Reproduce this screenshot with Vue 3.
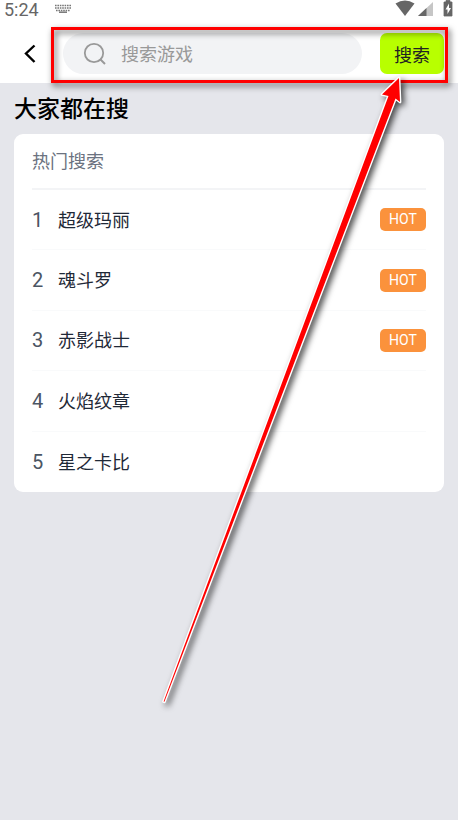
<script setup>
import { ref } from 'vue'

const keyword = ref('')
const games = [
  { name: '超级玛丽', hot: true },
  { name: '魂斗罗', hot: true },
  { name: '赤影战士', hot: true },
  { name: '火焰纹章', hot: false },
  { name: '星之卡比', hot: false },
]
</script>

<template>
  <div class="page">
    <header class="top">
      <div class="status">
        <span class="clock">5:24</span>
        <svg class="keyboard" width="16" height="9" viewBox="0 0 16 9" aria-hidden="true">
          <path d="M0 1.500h16M0 4h16M1 6.500h14" stroke="#777" stroke-width="1.500" stroke-dasharray="1.600 .8" />
          <path d="M4 8.200h8" stroke="#777" stroke-width="1.500" />
        </svg>
        <svg class="signals" width="60" height="18" viewBox="0 0 60 18" aria-hidden="true">
          <path d="M1.500 3.500Q11 -2.500 20.500 3.500L11 16z" fill="#666" />
          <path d="M39 2v14H24z" fill="#c6c6c6" />
          <path d="M32.500 8v8H24z" fill="#666" />
          <path d="M52 0.500h4v1.500h2v14h-8V2h2z" fill="#666" stroke="#666" stroke-width=".8" />
          <path d="M55 3.500l-3.500 6h2v4.500l3.500-6h-2z" fill="#fff" />
        </svg>
      </div>
      <form class="bar" @submit.prevent>
        <button class="back" type="button" aria-label="返回">
          <svg width="14" height="20" viewBox="0 0 14 20" aria-hidden="true">
            <path d="M11.500 1.500L3 9.500l8.500 8.500" fill="none" stroke="#000" stroke-width="2.400" />
          </svg>
        </button>
        <label class="field">
          <svg width="24" height="24" viewBox="0 0 24 24" aria-hidden="true">
            <circle cx="11" cy="11" r="9.200" fill="none" stroke="#999" stroke-width="1.800" />
            <path d="M17 17l5 5" stroke="#999" stroke-width="2" />
          </svg>
          <input v-model="keyword" type="text" placeholder="搜索游戏" aria-label="搜索游戏" />
        </label>
        <button class="submit" type="submit">搜索</button>
      </form>
      <div class="frame"></div>
    </header>

    <main>
      <h1>大家都在搜</h1>
      <section class="card">
        <h2>热门搜索</h2>
        <ol>
          <li v-for="(game, i) in games" :key="game.name">
            <span class="rank">{{ i + 1 }}</span>
            <span class="name">{{ game.name }}</span>
            <span v-if="game.hot" class="hot">HOT</span>
          </li>
        </ol>
      </section>
    </main>

    <svg class="arrow" width="458" height="820" viewBox="0 0 458 820" aria-hidden="true">
      <path
        d="M399 78L382 94.500l6.500 1.500L163.600 701.500l.8 .3L395.500 98.500l4.500 3.500z"
        fill="#f00" stroke="#fff" stroke-width="2.800" stroke-linejoin="round" paint-order="stroke"
      />
    </svg>
  </div>
</template>

<style>
body {
  margin: 0;
  background: #e5e6eb;
}
</style>

<style scoped>
.page {
  position: relative;
  min-height: 100vh;
  overflow: hidden;
  background: #e5e6eb;
  font-family: Roboto, "Noto Sans CJK SC", sans-serif;
  color: #1f2937;
}

.top {
  position: relative;
  padding-bottom: 9px;
  background: #fff;
}

.status {
  display: flex;
  align-items: flex-start;
  height: 33px;
  padding: 0 4px;
  box-sizing: border-box;
}

.clock {
  font-size: 18px;
  line-height: 19px;
  color: #666;
}

.keyboard {
  margin: 4px 0 0 16px;
}

.signals {
  margin-left: auto;
}

.bar {
  display: flex;
  height: 41px;
  padding: 0 14px 0 18px;
}

button {
  border: 0;
  padding: 0;
  font-family: inherit;
  cursor: pointer;
}

.back {
  display: flex;
  align-items: center;
  width: 45px;
  padding-left: 5px;
  background: none;
}

.field {
  display: flex;
  flex: 1;
  align-items: center;
  gap: 14px;
  min-width: 0;
  padding: 0 20px;
  border-radius: 21px;
  background: #f2f3f5;
}

.field svg {
  flex: none;
}

.field input {
  flex: 1;
  min-width: 0;
  border: 0;
  padding: 2px 0 0;
  outline: 0;
  background: none;
  font-family: inherit;
  font-size: 18px;
  line-height: 26px;
  color: #1f2937;
}

.field input::placeholder {
  color: #999;
  opacity: 1;
}

.submit {
  width: 64px;
  margin-left: 18px;
  border-radius: 7px;
  background: #b8ff00;
  font-size: 18px;
  color: #222;
}

.frame {
  position: absolute;
  inset: 27px 10px 0 51px;
  border: 3px solid #f00;
  filter: drop-shadow(2px 3px 3px rgba(0, 0, 0, 0.65));
  pointer-events: none;
}

main {
  padding: 10px 14px;
}

h1 {
  margin: 0 0 7px;
  font-size: 23px;
  font-weight: 500;
  line-height: 34px;
  color: #000;
}

.card {
  padding: 0 18px;
  border-radius: 9px;
  background: #fff;
}

h2 {
  margin: 0;
  padding-top: 2px;
  border-bottom: 2px solid #f3f4f6;
  font-size: 18px;
  font-weight: 400;
  line-height: 52px;
  color: #6b7280;
}

ol {
  display: grid;
  grid-auto-rows: 1fr;
  min-height: 302px;
  margin: 0;
  padding: 0;
  list-style: none;
}

li {
  display: flex;
  align-items: center;
  border-bottom: 1px solid #f9fafb;
}

li:last-child {
  border-bottom: 0;
}

.rank {
  width: 26px;
  font-size: 20px;
  color: #4b5563;
}

.name {
  flex: 1;
  padding-top: 2px;
  font-size: 18px;
  line-height: 26px;
}

.hot {
  width: 46px;
  border-radius: 5px;
  background: #fb923c;
  font-size: 14px;
  line-height: 23px;
  text-align: center;
  color: #fff;
}

.arrow {
  position: absolute;
  top: 0;
  left: 0;
  filter: drop-shadow(3px 3px 3px rgba(0, 0, 0, 0.7));
  pointer-events: none;
}
</style>
